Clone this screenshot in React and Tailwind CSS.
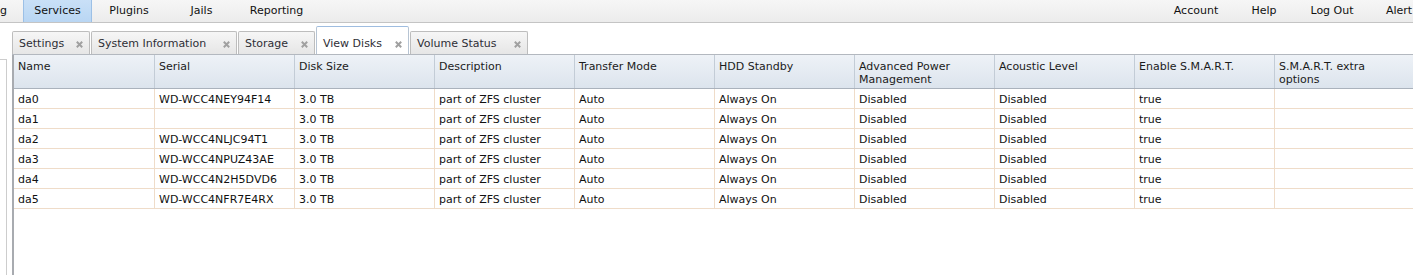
import React from "react";

const navLeft = [
  { label: "Services", w: "w-[69px]", active: true },
  { label: "Plugins", w: "w-[74px]" },
  { label: "Jails", w: "w-[71px]" },
  { label: "Reporting", w: "w-[79px]" },
];

const navRight = [
  { label: "Account", w: "w-[68px]" },
  { label: "Help", w: "w-[68px]" },
  { label: "Log Out", w: "w-[68px]" },
];

const tabs = [
  { label: "Settings", w: "w-[78px]" },
  { label: "System Information", w: "w-[146px]" },
  { label: "Storage", w: "w-[77px]" },
  { label: "View Disks", w: "w-[93px]", active: true },
  { label: "Volume Status", w: "w-[118px]" },
];

const columns = [
  ["Name"],
  ["Serial"],
  ["Disk Size"],
  ["Description"],
  ["Transfer Mode"],
  ["HDD Standby"],
  ["Advanced Power", "Management"],
  ["Acoustic Level"],
  ["Enable S.M.A.R.T."],
  ["S.M.A.R.T. extra", "options"],
];

const disks = [
  ["da0", "WD-WCC4NEY94F14"],
  ["da1", ""],
  ["da2", "WD-WCC4NLJC94T1"],
  ["da3", "WD-WCC4NPUZ43AE"],
  ["da4", "WD-WCC4N2H5DVD6"],
  ["da5", "WD-WCC4NFR7E4RX"],
];

function CloseX() {
  return (
    <svg width="7" height="7" viewBox="0 0 7 7" className="mt-[1px] shrink-0">
      <path d="M0.8 0.8 L6.2 6.2 M6.2 0.8 L0.8 6.2" stroke="#a0a0a0" strokeWidth="2" />
    </svg>
  );
}

export default function App() {
  return (
    <div className="h-[275px] w-[1413px] overflow-hidden bg-white font-['DejaVu_Sans',sans-serif] text-[11px] text-[#111]">
      {/* top navigation */}
      <div className="flex h-[23px] border-b border-[#c4c4c4] bg-gradient-to-b from-[#f6f6f6] to-[#ececec]">
        <div className="w-[23px] shrink-0 pt-[4px] leading-[14px]">g</div>
        {navLeft.map((n) => (
          <div
            key={n.label}
            className={`${n.w} flex shrink-0 justify-center pt-[4px] leading-[14px] ${
              n.active ? "border-x border-[#9cc0e6] bg-gradient-to-b from-[#c9e0f7] to-[#b9d6f3]" : ""
            }`}
          >
            {n.label}
          </div>
        ))}
        <div className="flex-1" />
        {navRight.map((n) => (
          <div key={n.label} className={`${n.w} flex shrink-0 justify-center pt-[4px] leading-[14px]`}>
            {n.label}
          </div>
        ))}
        <div className="w-[47px] shrink-0 overflow-hidden whitespace-nowrap pl-[20px] pt-[4px] leading-[14px]">Alert</div>
      </div>

      <div className="flex h-[252px]">
        {/* collapsed tree panel */}
        <div className="mt-[36px] w-[7px] shrink-0 border-r border-t border-[#cdcdcd]" />

        <div className="ml-[5px] flex min-w-0 flex-1 flex-col pt-[3px]">
          {/* tab strip */}
          <div className="flex h-[29px] shrink-0 items-end gap-[1px] border-b border-[#b3b8bf]">
            {tabs.map((t) => (
              <div
                key={t.label}
                className={`${t.w} flex shrink-0 items-center justify-between rounded-t-[2px] border border-b-0 px-[6px] text-[#2e2e36] ${
                  t.active
                    ? "h-[28px] border-[#b7c4d3] border-t-[#9fbde0] bg-white pt-[7px]"
                    : "h-[23px] border-[#bdbdbd] bg-gradient-to-b from-[#f6f6f6] to-[#e6e6e6] pt-[2px]"
                }`}
              >
                <span className="whitespace-nowrap leading-[14px]">{t.label}</span>
                <CloseX />
              </div>
            ))}
          </div>

          {/* grid */}
          <div className="flex-1 border-l-2 border-[#a8abb0]">
            <div className="flex h-[34px] border-b border-[#aab2bc] bg-gradient-to-b from-[#eef2f7] to-[#dce4ed]">
              {columns.map((c, i) => (
                <div
                  key={c[0]}
                  className={`${i === 0 ? "w-[141px]" : "w-[140px]"} shrink-0 border-r border-[#c3ccd6] px-[4px] pt-[5px] leading-[13px] text-[#1b1b1b]`}
                >
                  {c.map((line) => (
                    <div key={line} className="whitespace-nowrap">
                      {line}
                    </div>
                  ))}
                </div>
              ))}
            </div>
            {disks.map(([name, serial]) => {
              const cells = [
                name,
                serial,
                "3.0 TB",
                "part of ZFS cluster",
                "Auto",
                "Always On",
                "Disabled",
                "Disabled",
                "true",
                "",
              ];
              return (
                <div key={name} className="flex h-[20px] border-b border-[#efdcc9]">
                  {cells.map((v, i) => (
                    <div
                      key={i}
                      className={`${i === 0 ? "w-[141px]" : "w-[140px]"} shrink-0 border-r border-[#efdcc9] px-[4px] pt-[4px] leading-[14px]`}
                    >
                      {v}
                    </div>
                  ))}
                </div>
              );
            })}
          </div>
        </div>
      </div>
    </div>
  );
}
